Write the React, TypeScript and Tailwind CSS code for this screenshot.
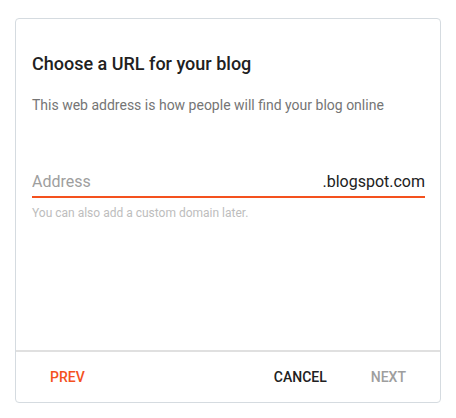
import React, { useState } from 'react'

export default function App() {
  const [address, setAddress] = useState('')

  return (
    <div className="min-h-[418px] w-[456px] bg-white pt-[18px] pl-[15px] font-['Roboto',sans-serif]">
      <div className="flex h-[385px] w-[426px] flex-col rounded-[4px] border border-[#d5dbe0] bg-white">
        <div className="flex-1 pl-[16px] pr-[15px] pt-[33px]">
          <h2 className="text-[18px] leading-[24px] font-medium text-[#212121]">
            Choose a URL for your blog
          </h2>
          <p className="mt-[19px] text-[14px] leading-[20px] text-[#757575]">
            This web address is how people will find your blog online
          </p>

          <div className="mt-[55px] flex items-center border-b-2 border-b-[#f4511e] pb-[2px]">
            <input
              value={address}
              onChange={(e) => setAddress(e.target.value)}
              placeholder="Address"
              className="min-w-0 flex-1 bg-transparent text-[16px] leading-[24px] text-[#212121] outline-none placeholder:text-[#9e9e9e]"
            />
            <span className="text-[16px] leading-[24px] text-[#212121]">.blogspot.com</span>
          </div>
          <p className="mt-[7px] text-[12px] leading-[16px] text-[#bdbdbd]">
            You can also add a custom domain later.
          </p>
        </div>

        <div className="flex h-[52px] items-center border-t-2 border-[#e0e0e0] px-[18px]">
          <button className="px-4 text-[14px] leading-[20px] font-medium text-[#f4511e]">PREV</button>
          <div className="flex-1" />
          <button className="px-4 text-[14px] leading-[20px] font-medium text-[#212121]">CANCEL</button>
          <button disabled className="ml-3 px-4 text-[14px] leading-[20px] font-medium text-[#9e9e9e]">
            NEXT
          </button>
        </div>
      </div>
    </div>
  )
}
